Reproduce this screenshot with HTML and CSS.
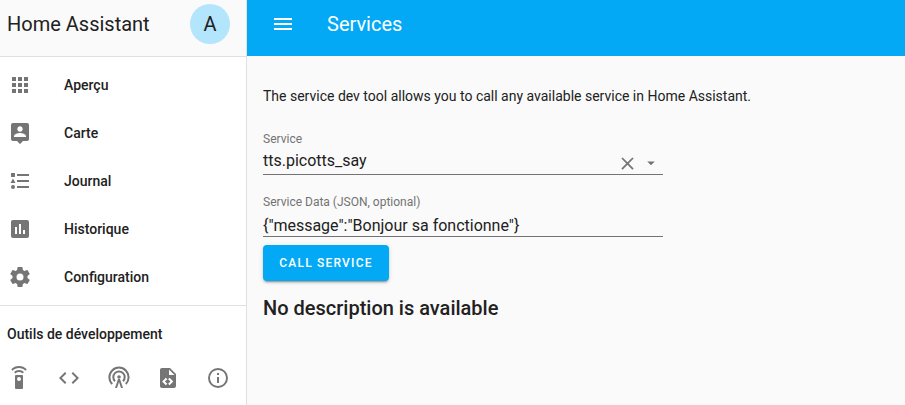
FILE: index.html
```html
<!DOCTYPE html>
<html lang="en">
<head>
  <meta charset="UTF-8" />
  <title>Services - Home Assistant</title>
  <link rel="stylesheet" href="styles.css">
</head>
<body>

<aside class="sidebar">
  <div class="brand">
    <span class="brand-name">Home Assistant</span>
    <span class="avatar">A</span>
  </div>

  <nav class="menu">
    <a class="menu-item" href="#">
      <svg class="icon" viewBox="0 0 24 24"><path d="M16,20H20V16H16M16,14H20V10H16M10,8H14V4H10M16,8H20V4H16M10,14H14V10H10M4,14H8V10H4M4,20H8V16H4M10,20H14V16H10M4,8H8V4H4V8Z"/></svg>
      Aperçu
    </a>
    <a class="menu-item" href="#">
      <svg class="icon" viewBox="0 0 24 24"><path d="M18,16H6V15.1C6,13.1 10,12 12,12C14,12 18,13.1 18,15.1M12,5.3C13.5,5.3 14.7,6.5 14.7,8C14.7,9.5 13.5,10.7 12,10.7C10.5,10.7 9.3,9.5 9.3,8C9.3,6.5 10.5,5.3 12,5.3M19,2H5C3.89,2 3,2.89 3,4V18A2,2 0 0,0 5,20H9L12,23L15,20H19A2,2 0 0,0 21,18V4C21,2.89 20.1,2 19,2Z"/></svg>
      Carte
    </a>
    <a class="menu-item" href="#">
      <svg class="icon" viewBox="0 0 24 24"><path d="M5,9.5L7.5,14H2.5L5,9.5M3,4H7V8H3V4M5,20A2,2 0 0,0 7,18A2,2 0 0,0 5,16A2,2 0 0,0 3,18A2,2 0 0,0 5,20M9,5V7H21V5H9M9,19H21V17H9V19M9,13H21V11H9V13Z"/></svg>
      Journal
    </a>
    <a class="menu-item" href="#">
      <svg class="icon" viewBox="0 0 24 24"><path d="M17,17H15V13H17M13,17H11V7H13M9,17H7V10H9M19,3H5C3.89,3 3,3.89 3,5V19A2,2 0 0,0 5,21H19A2,2 0 0,0 21,19V5C21,3.89 20.1,3 19,3Z"/></svg>
      Historique
    </a>
    <a class="menu-item" href="#">
      <svg class="icon" viewBox="0 0 24 24"><path d="M12,15.5A3.5,3.5 0 0,1 8.5,12A3.5,3.5 0 0,1 12,8.5A3.5,3.5 0 0,1 15.5,12A3.5,3.5 0 0,1 12,15.5M19.43,12.97C19.47,12.65 19.5,12.33 19.5,12C19.5,11.67 19.47,11.34 19.43,11L21.54,9.37C21.73,9.22 21.78,8.95 21.66,8.73L19.66,5.27C19.54,5.05 19.27,4.96 19.05,5.05L16.56,6.05C16.04,5.66 15.5,5.32 14.87,5.07L14.5,2.42C14.46,2.18 14.25,2 14,2H10C9.75,2 9.54,2.18 9.5,2.42L9.13,5.07C8.5,5.32 7.96,5.66 7.44,6.05L4.95,5.05C4.73,4.96 4.46,5.05 4.34,5.27L2.34,8.73C2.21,8.95 2.27,9.22 2.46,9.37L4.57,11C4.53,11.34 4.5,11.67 4.5,12C4.5,12.33 4.53,12.65 4.57,12.97L2.46,14.63C2.27,14.78 2.21,15.05 2.34,15.27L4.34,18.73C4.46,18.95 4.73,19.03 4.95,18.95L7.44,17.94C7.96,18.34 8.5,18.68 9.13,18.93L9.5,21.58C9.54,21.82 9.75,22 10,22H14C14.25,22 14.46,21.82 14.5,21.58L14.87,18.93C15.5,18.67 16.04,18.34 16.56,17.94L19.05,18.95C19.27,19.03 19.54,18.95 19.66,18.73L21.66,15.27C21.78,15.05 21.73,14.78 21.54,14.63L19.43,12.97Z"/></svg>
      Configuration
    </a>
  </nav>

  <div class="dev-title">Outils de développement</div>
  <div class="dev-tools">
    <svg class="icon" viewBox="0 0 24 24"><path d="M12,0C8.96,0 6.21,1.23 4.22,3.22L5.63,4.63C7.26,3 9.5,2 12,2C14.5,2 16.74,3 18.36,4.64L19.77,3.23C17.79,1.23 15.04,0 12,0M7.05,6.05L8.46,7.46C9.37,6.56 10.62,6 12,6C13.38,6 14.63,6.56 15.54,7.46L16.95,6.05C15.68,4.78 13.93,4 12,4C10.07,4 8.32,4.78 7.05,6.05M12,15A2,2 0 0,1 10,13A2,2 0 0,1 12,11A2,2 0 0,1 14,13A2,2 0 0,1 12,15M15,9H9A1,1 0 0,0 8,10V22A1,1 0 0,0 9,23H15A1,1 0 0,0 16,22V10A1,1 0 0,0 15,9Z"/></svg>
    <svg class="icon" viewBox="0 0 24 24"><path d="M14.6,16.6L19.2,12L14.6,7.4L16,6L22,12L16,18L14.6,16.6M9.4,16.6L4.8,12L9.4,7.4L8,6L2,12L8,18L9.4,16.6Z"/></svg>
    <svg class="icon" viewBox="0 0 24 24"><circle cx="12" cy="11" r="1.8"/><path class="line" d="M5.2,18A9.6,9.6 0 1,1 18.8,18M8,15.2A5.7,5.7 0 1,1 16,15.2"/><path d="M11,13H13L16,22H14L12,16L10,22H8Z"/></svg>
    <svg class="icon" viewBox="0 0 24 24"><path d="M13,9H18.5L13,3.5V9M6,2H14L20,8V20A2,2 0 0,1 18,22H6C4.89,22 4,21.1 4,20V4C4,2.89 4.89,2 6,2M6.12,15.5L9.86,19.24L11.28,17.83L8.95,15.5L11.28,13.17L9.86,11.76L6.12,15.5M17.28,15.5L13.54,11.76L12.12,13.17L14.45,15.5L12.12,17.83L13.54,19.24L17.28,15.5Z"/></svg>
    <svg class="icon" viewBox="0 0 24 24"><path d="M11,9H13V7H11M12,20C7.59,20 4,16.41 4,12C4,7.59 7.59,4 12,4C16.41,4 20,7.59 20,12C20,16.41 16.41,20 12,20M12,2A10,10 0 0,0 2,12A10,10 0 0,0 12,22A10,10 0 0,0 22,12A10,10 0 0,0 12,2M11,17H13V11H11V17Z"/></svg>
  </div>
</aside>

<div class="page">
  <header class="toolbar">
    <svg class="menu-icon" viewBox="0 0 24 24"><path d="M3,6H21V8H3V6M3,11H21V13H3V11M3,16H21V18H3V16Z"/></svg>
    <span class="toolbar-title">Services</span>
  </header>

  <main class="content">
    <p class="intro">The service dev tool allows you to call any available service in Home Assistant.</p>

    <div class="field field-service">
      <label class="field-label">Service</label>
      <div class="field-value">
        <span class="value-text">tts.picotts_say</span>
        <svg class="clear-icon" viewBox="0 0 24 24"><path d="M19,6.41L17.59,5L12,10.59L6.41,5L5,6.41L10.59,12L5,17.59L6.41,19L12,13.41L17.59,19L19,17.59L13.41,12L19,6.41Z"/></svg>
        <svg class="drop-icon" viewBox="0 0 24 24"><path d="M7 10l5 5 5-5z"/></svg>
      </div>
    </div>

    <div class="field field-data">
      <label class="field-label">Service Data (JSON, optional)</label>
      <div class="field-value">
        <span class="value-text">{"message":"Bonjour sa fonctionne"}</span>
      </div>
    </div>

    <button class="call-btn" type="button">Call Service</button>

    <h2 class="no-desc">No description is available</h2>
  </main>
</div>

</body>
</html>
```

FILE: styles.css
```css
html, body {
  height: 100%;
}
body {
  margin: 0;
  display: flex;
  overflow: hidden;
  font-family: Roboto, sans-serif;
  color: #212121;
  background: #fafafa;
}
.sidebar {
  width: 246px;
  flex-shrink: 0;
  background: #fff;
  border-right: 1px solid #e0e0e0;
}
.brand {
  height: 57px;
  box-sizing: border-box;
  display: flex;
  align-items: flex-start;
  justify-content: space-between;
  padding: 4px 16px 0 7px;
  background: #fafafa;
  border-bottom: 1px solid #e0e0e0;
}
.brand-name {
  font-size: 20px;
  line-height: 40px;
}
.avatar {
  width: 40px;
  height: 40px;
  border-radius: 50%;
  background: #b3e5fc;
  display: flex;
  align-items: center;
  justify-content: center;
  font-size: 20px;
}
.menu {
  padding: 4px 0;
  border-bottom: 1px solid #e0e0e0;
}
.menu-item {
  height: 48px;
  display: flex;
  align-items: center;
  padding-left: 8px;
  color: #212121;
  font-size: 14px;
  font-weight: 500;
  text-decoration: none;
}
.menu-item .icon {
  margin-right: 32px;
}
.icon {
  width: 24px;
  height: 24px;
  fill: #757575;
  flex-shrink: 0;
}
.icon .line {
  fill: none;
  stroke: #757575;
  stroke-width: 2;
}
.dev-title {
  padding: 20px 7px 0;
  font-size: 14px;
  font-weight: 500;
  line-height: 16px;
}
.dev-tools {
  display: flex;
  justify-content: space-between;
  padding: 24px 16px 0 7px;
}
.page {
  flex-grow: 1;
}
.toolbar {
  height: 56px;
  box-sizing: border-box;
  display: flex;
  align-items: center;
  padding-bottom: 8px;
  background: #03a9f4;
  color: #fff;
}
.menu-icon {
  width: 24px;
  height: 24px;
  margin-left: 24px;
  fill: #fff;
}
.toolbar-title {
  margin-left: 32px;
  font-size: 20px;
}
.content {
  padding: 30px 16px 0;
}
.intro {
  margin: 0;
  font-size: 14px;
  line-height: 20px;
}
.field {
  width: 400px;
}
.field-service {
  margin-top: 25px;
}
.field-data {
  margin-top: 19px;
}
.field-label {
  display: block;
  font-size: 12px;
  line-height: 16px;
  color: #737373;
}
.field-value {
  height: 27px;
  display: flex;
  align-items: center;
  border-bottom: 1px solid #737373;
}
.field-data .field-value {
  height: 26px;
}
.value-text {
  flex-grow: 1;
  font-size: 16px;
}
.field-data .value-text {
  padding-top: 5px;
}
.clear-icon {
  width: 21px;
  height: 21px;
  margin-top: 6px;
  fill: #737373;
}
.drop-icon {
  width: 18px;
  height: 18px;
  margin: 5px 3px 0 4px;
  fill: #737373;
}
.call-btn {
  display: block;
  margin-top: 8px;
  height: 36px;
  width: 126px;
  padding: 0;
  border: none;
  border-radius: 4px;
  background: #03a9f4;
  color: #fff;
  font-family: Roboto, sans-serif;
  font-size: 12px;
  font-weight: 500;
  letter-spacing: 1.2px;
  text-transform: uppercase;
  box-shadow: 0 2px 2px 0 rgba(0, 0, 0, 0.14), 0 1px 5px 0 rgba(0, 0, 0, 0.12), 0 3px 1px -2px rgba(0, 0, 0, 0.2);
}
.no-desc {
  margin: 13px 0 0;
  font-size: 20px;
  font-weight: 500;
  line-height: 28px;
}
```
